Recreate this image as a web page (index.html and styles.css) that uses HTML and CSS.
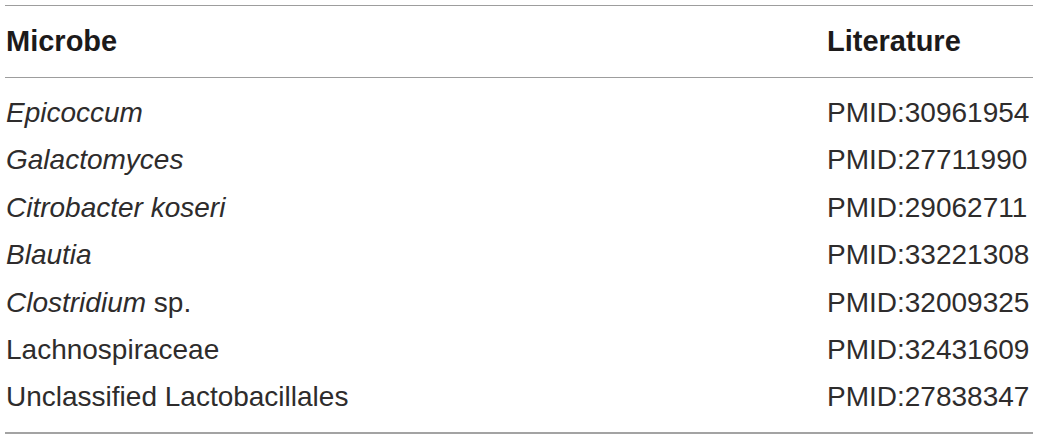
FILE: index.html
```html
<!DOCTYPE html>
<html lang="en">
<head>
<meta charset="utf-8">
<title>Microbe literature</title>
<link rel="stylesheet" href="styles.css">
</head>
<body>
<div class="wrap">
<table class="tbl">
<thead>
<tr><th class="c-mic">Microbe</th><th class="c-lit">Literature</th></tr>
</thead>
<tbody>
<tr class="first"><td class="c-mic"><i>Epicoccum</i></td><td class="c-lit">PMID:30961954</td></tr>
<tr><td class="c-mic"><i>Galactomyces</i></td><td class="c-lit">PMID:27711990</td></tr>
<tr><td class="c-mic"><i>Citrobacter koseri</i></td><td class="c-lit">PMID:29062711</td></tr>
<tr><td class="c-mic"><i>Blautia</i></td><td class="c-lit">PMID:33221308</td></tr>
<tr><td class="c-mic"><i>Clostridium</i> sp.</td><td class="c-lit">PMID:32009325</td></tr>
<tr><td class="c-mic">Lachnospiraceae</td><td class="c-lit">PMID:32431609</td></tr>
<tr class="last"><td class="c-mic">Unclassified Lactobacillales</td><td class="c-lit">PMID:27838347</td></tr>
</tbody>
</table>
</div>
</body>
</html>
```

FILE: styles.css
```css
html, body {
  margin: 0;
  padding: 0;
  background: #ffffff;
}
.wrap {
  padding: 5px 6px 0 5px;
}
.tbl {
  width: 1028px;
  border-collapse: collapse;
  font-family: "Liberation Sans", Arial, Helvetica, sans-serif;
  color: #231f20;
  border-top: 1px solid #9d9d9d;
  border-bottom: 2px solid #a3a3a3;
}
.tbl thead tr {
  border-bottom: 1px solid #9d9d9d;
}
.tbl th {
  font-size: 29px;
  font-weight: bold;
  text-align: left;
  line-height: 47px;
  padding: 11.5px 0 12.5px 0;
  color: #1c1a1a;
}
.tbl td {
  font-size: 28px;
  font-weight: normal;
  line-height: 47.4px;
  padding: 0;
  text-align: left;
  color: #2e2c2c;
}
.tbl .c-mic {
  padding-left: 1px;
}
.tbl .c-lit {
  width: 206px;
  padding-right: 0;
}
.tbl tr.first td {
  padding-top: 11px;
}
.tbl tr.last td {
  padding-bottom: 11px;
}
.tbl i {
  font-style: italic;
}
```
